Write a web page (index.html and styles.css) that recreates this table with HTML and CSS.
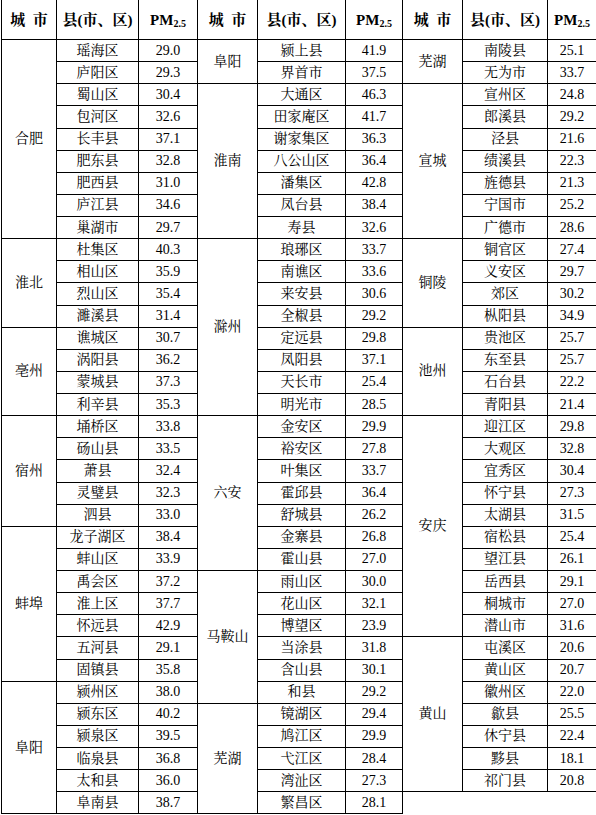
FILE: index.html
```html
<!DOCTYPE html>
<html lang="zh">
<head>
<meta charset="utf-8">
<title>安徽省各县(市、区) PM2.5</title>
<link rel="stylesheet" href="styles.css">
</head>
<body>
<table class="pm">
<colgroup>
<col class="c1"><col class="c2"><col class="c3">
<col class="c4"><col class="c5"><col class="c6">
<col class="c7"><col class="c8"><col class="c9">
</colgroup>
<thead>
<tr class="head">
<th>城&ensp;市</th><th>县(市、区)</th><th>PM<sub>2.5</sub></th>
<th>城&ensp;市</th><th>县(市、区)</th><th>PM<sub>2.5</sub></th>
<th>城&ensp;市</th><th>县(市、区)</th><th>PM<sub>2.5</sub></th>
</tr>
</thead>
<tbody>
<tr><td rowspan="9">合肥</td><td>瑶海区</td><td>29.0</td><td rowspan="2">阜阳</td><td>颍上县</td><td>41.9</td><td rowspan="2">芜湖</td><td>南陵县</td><td>25.1</td></tr>
<tr><td>庐阳区</td><td>29.3</td><td>界首市</td><td>37.5</td><td>无为市</td><td>33.7</td></tr>
<tr><td>蜀山区</td><td>30.4</td><td rowspan="7">淮南</td><td>大通区</td><td>46.3</td><td rowspan="7">宣城</td><td>宣州区</td><td>24.8</td></tr>
<tr><td>包河区</td><td>32.6</td><td>田家庵区</td><td>41.7</td><td>郎溪县</td><td>29.2</td></tr>
<tr><td>长丰县</td><td>37.1</td><td>谢家集区</td><td>36.3</td><td>泾县</td><td>21.6</td></tr>
<tr><td>肥东县</td><td>32.8</td><td>八公山区</td><td>36.4</td><td>绩溪县</td><td>22.3</td></tr>
<tr><td>肥西县</td><td>31.0</td><td>潘集区</td><td>42.8</td><td>旌德县</td><td>21.3</td></tr>
<tr><td>庐江县</td><td>34.6</td><td>凤台县</td><td>38.4</td><td>宁国市</td><td>25.2</td></tr>
<tr><td>巢湖市</td><td>29.7</td><td>寿县</td><td>32.6</td><td>广德市</td><td>28.6</td></tr>
<tr><td rowspan="4">淮北</td><td>杜集区</td><td>40.3</td><td rowspan="8">滁州</td><td>琅琊区</td><td>33.7</td><td rowspan="4">铜陵</td><td>铜官区</td><td>27.4</td></tr>
<tr><td>相山区</td><td>35.9</td><td>南谯区</td><td>33.6</td><td>义安区</td><td>29.7</td></tr>
<tr><td>烈山区</td><td>35.4</td><td>来安县</td><td>30.6</td><td>郊区</td><td>30.2</td></tr>
<tr><td>濉溪县</td><td>31.4</td><td>全椒县</td><td>29.2</td><td>枞阳县</td><td>34.9</td></tr>
<tr><td rowspan="4">亳州</td><td>谯城区</td><td>30.7</td><td>定远县</td><td>29.8</td><td rowspan="4">池州</td><td>贵池区</td><td>25.7</td></tr>
<tr><td>涡阳县</td><td>36.2</td><td>凤阳县</td><td>37.1</td><td>东至县</td><td>25.7</td></tr>
<tr><td>蒙城县</td><td>37.3</td><td>天长市</td><td>25.4</td><td>石台县</td><td>22.2</td></tr>
<tr><td>利辛县</td><td>35.3</td><td>明光市</td><td>28.5</td><td>青阳县</td><td>21.4</td></tr>
<tr><td rowspan="5">宿州</td><td>埇桥区</td><td>33.8</td><td rowspan="7">六安</td><td>金安区</td><td>29.9</td><td rowspan="10">安庆</td><td>迎江区</td><td>29.8</td></tr>
<tr><td>砀山县</td><td>33.5</td><td>裕安区</td><td>27.8</td><td>大观区</td><td>32.8</td></tr>
<tr><td>萧县</td><td>32.4</td><td>叶集区</td><td>33.7</td><td>宜秀区</td><td>30.4</td></tr>
<tr><td>灵璧县</td><td>32.3</td><td>霍邱县</td><td>36.4</td><td>怀宁县</td><td>27.3</td></tr>
<tr><td>泗县</td><td>33.0</td><td>舒城县</td><td>26.2</td><td>太湖县</td><td>31.5</td></tr>
<tr><td rowspan="7">蚌埠</td><td>龙子湖区</td><td>38.4</td><td>金寨县</td><td>26.8</td><td>宿松县</td><td>25.4</td></tr>
<tr><td>蚌山区</td><td>33.9</td><td>霍山县</td><td>27.0</td><td>望江县</td><td>26.1</td></tr>
<tr><td>禹会区</td><td>37.2</td><td rowspan="6">马鞍山</td><td>雨山区</td><td>30.0</td><td>岳西县</td><td>29.1</td></tr>
<tr><td>淮上区</td><td>37.7</td><td>花山区</td><td>32.1</td><td>桐城市</td><td>27.0</td></tr>
<tr><td>怀远县</td><td>42.9</td><td>博望区</td><td>23.9</td><td>潜山市</td><td>31.6</td></tr>
<tr><td>五河县</td><td>29.1</td><td>当涂县</td><td>31.8</td><td rowspan="7">黄山</td><td>屯溪区</td><td>20.6</td></tr>
<tr><td>固镇县</td><td>35.8</td><td>含山县</td><td>30.1</td><td>黄山区</td><td>20.7</td></tr>
<tr><td rowspan="6">阜阳</td><td>颍州区</td><td>38.0</td><td>和县</td><td>29.2</td><td>徽州区</td><td>22.0</td></tr>
<tr><td>颍东区</td><td>40.2</td><td rowspan="5">芜湖</td><td>镜湖区</td><td>29.4</td><td>歙县</td><td>25.5</td></tr>
<tr><td>颍泉区</td><td>39.5</td><td>鸠江区</td><td>29.9</td><td>休宁县</td><td>22.4</td></tr>
<tr><td>临泉县</td><td>36.8</td><td>弋江区</td><td>28.4</td><td>黟县</td><td>18.1</td></tr>
<tr><td>太和县</td><td>36.0</td><td>湾沚区</td><td>27.3</td><td>祁门县</td><td>20.8</td></tr>
<tr><td>阜南县</td><td>38.7</td><td>繁昌区</td><td>28.1</td><td class="blank"></td><td class="blank"></td></tr>
</tbody>
</table>
</body>
</html>
```

FILE: styles.css
```css
html, body {
  margin: 0;
  padding: 0;
  background: #ffffff;
}

.pm {
  border-collapse: collapse;
  table-layout: fixed;
  width: 595px;
  margin: -1px 0 0 1px;
  color: #000;
  font-family: "Liberation Serif", "Noto Serif CJK SC", "Noto Sans CJK SC", serif;
}

.c1 { width: 55px; }
.c2 { width: 82px; }
.c3 { width: 59px; }
.c4 { width: 60px; }
.c5 { width: 88px; }
.c6 { width: 57px; }
.c7 { width: 60px; }
.c8 { width: 85px; }
.c9 { width: 49px; }

.pm th,
.pm td {
  border: 1px solid #000;
  padding: 0;
  text-align: center;
  vertical-align: middle;
  overflow: hidden;
  white-space: nowrap;
}

.pm td {
  font-size: 14px;
  line-height: 16px;
  font-weight: normal;
  color: #000;
}

.pm th {
  font-size: 15px;
  line-height: 16px;
  font-weight: bold;
}

.pm th sub {
  font-size: 10px;
  vertical-align: -2px;
  line-height: 0;
}

.head {
  height: 40px;
}

.pm tbody tr {
  height: 22.14px;
}

.pm td.blank {
  border: none;
}
```
